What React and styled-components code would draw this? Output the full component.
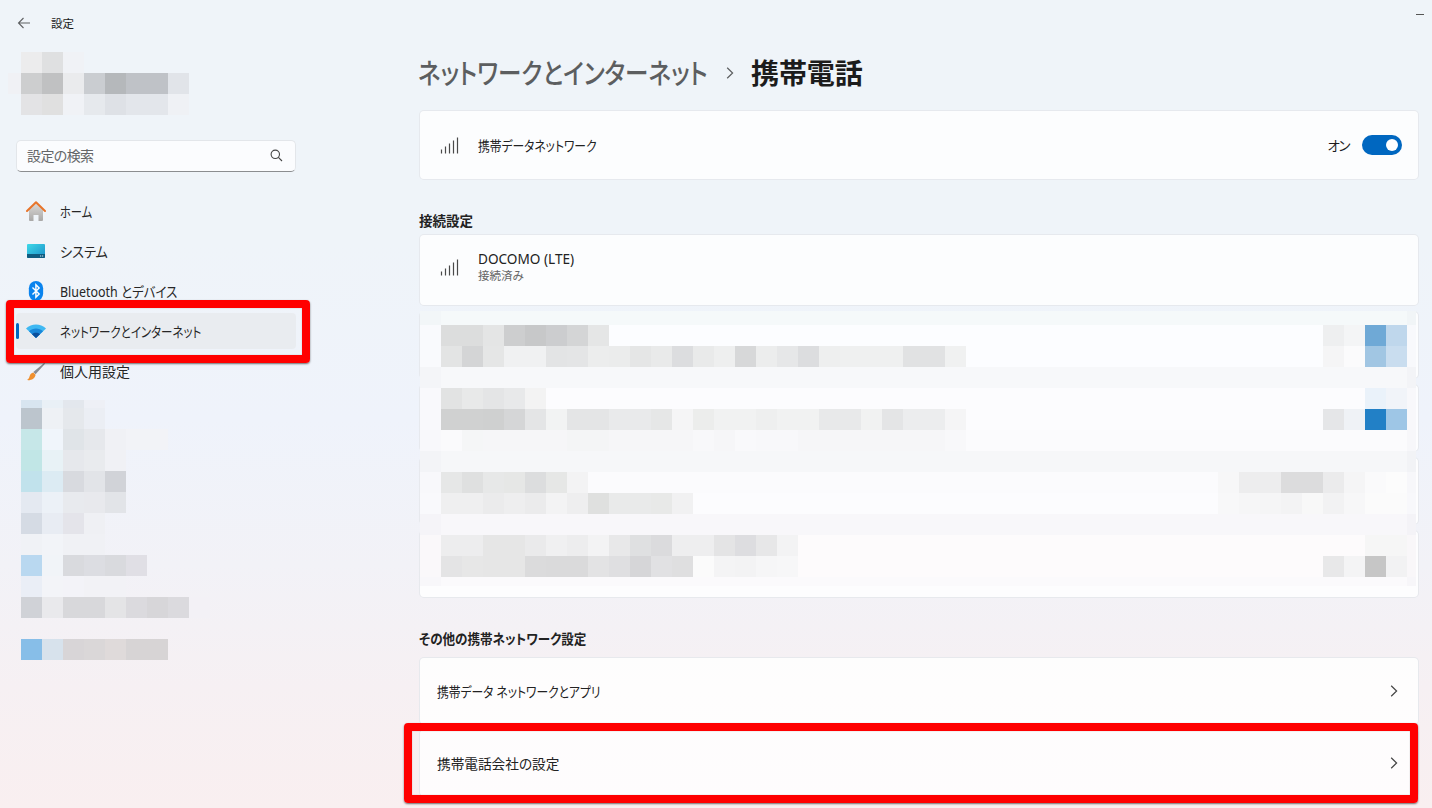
import React from "react";
import styled, { createGlobalStyle } from "styled-components";

const Global = createGlobalStyle`
  html, body { margin: 0; padding: 0; height: 100%; }
  body { font-family: "Noto Sans", "Noto Sans CJK JP", sans-serif; font-feature-settings: "palt"; color: #1b1b1b; }
`;

const Page = styled.div`
  width: 1432px;
  height: 808px;
  overflow: hidden;
  display: flex;
  flex-direction: column;
  background: linear-gradient(180deg, #eff4f9 0%, #eff4f9 30%, #eff3fb 52%, #f2f2f7 70%, #f6f0f3 85%, #f9eff0 100%);
`;
const TitleBar = styled.header`
  height: 46px;
  flex: none;
  display: flex;
  align-items: center;
  padding: 0 8px 0 17px;
  color: #1b1b1b;
`;
const AppTitle = styled.span`
  font-size: 11.5px;
  margin-left: 20px;
`;
const Minimize = styled.span`
  margin-left: auto;
  align-self: flex-start;
  margin-top: 14px;
  width: 8px;
  height: 1px;
  background: #555;
`;
const Body = styled.div`
  flex: 1;
  display: flex;
  min-height: 0;
`;
const Sidebar = styled.aside`
  width: 419px;
  flex: none;
  padding-left: 16px;
  box-sizing: border-box;
`;
const Search = styled.div`
  width: 280px;
  height: 32px;
  box-sizing: border-box;
  margin-top: 25px;
  padding: 0 12px 2px 10px;
  display: flex;
  align-items: center;
  justify-content: space-between;
  background: #fbfcfe;
  border: 1px solid #e3e6ea;
  border-bottom: 1px solid #8b8d90;
  border-radius: 5px;
  font-size: 14px;
  letter-spacing: -0.6px;
  color: #646668;
`;
const Nav = styled.nav`
  width: 280px;
  margin-top: 21px;
  display: flex;
  flex-direction: column;
  gap: 4px;
`;
const NavItem = styled.div`
  position: relative;
  height: 36px;
  display: flex;
  align-items: center;
  border-radius: 4px;
  background: ${(p) => (p.$active ? "#e9ecf0" : "transparent")};
  font-size: 14px;
  color: #262626;
`;
const NavIcon = styled.span`
  width: 44px;
  padding-left: 10px;
  box-sizing: border-box;
  flex: none;
  display: flex;
  align-items: center;
`;
const Indicator = styled.span`
  position: absolute;
  left: 0;
  top: 10px;
  width: 3px;
  height: 16px;
  border-radius: 2px;
  background: #0067c0;
`;
const RedFrame = styled.span`
  position: absolute;
  top: ${(p) => p.$t}px;
  left: ${(p) => p.$l}px;
  right: ${(p) => p.$r}px;
  bottom: ${(p) => p.$b}px;
  border: 8px solid #ff0000;
  border-radius: 4px;
  box-shadow: 0 1px 2px rgba(0, 0, 0, 0.55), inset 0 0 1px rgba(0, 0, 0, 0.45);
  z-index: 2;
`;
/* Yu Gothic's narrow kana: condense the Noto glyphs to the measured run width */
const Squeeze = styled.span`
  display: inline-block;
  white-space: nowrap;
  width: ${(p) => p.$w}px;
  transform-origin: 0 50%;
  transform: scaleX(${(p) => p.$s});
`;
const Main = styled.main`
  flex: 1;
  min-width: 0;
  padding-right: 13px;
`;
const Breadcrumb = styled.h1`
  margin: 8px 0 0;
  height: 38px;
  display: flex;
  align-items: center;
  font-size: 28px;
  font-weight: 500;
  line-height: 38px;
`;
const Crumb = styled(Squeeze)`
  color: #5c5e60;
  margin-left: -1px;
`;
const CrumbSep = styled.span`
  display: flex;
  margin: 0 17px 0 18px;
`;
const CrumbNow = styled.span`
  color: #1c1c1c;
  font-weight: 700;
  letter-spacing: -0.1px;
`;
const Card = styled.div`
  height: ${(p) => p.$h || 68}px;
  box-sizing: border-box;
  display: flex;
  align-items: center;
  padding: 0 ${(p) => p.$pr || 16}px ${(p) => p.$pb || 0}px ${(p) => p.$pl || 20}px;
  background: rgba(255, 255, 255, 0.82);
  border: 1px solid rgba(190, 196, 205, 0.35);
  border-radius: 5px;
  position: relative;
  font-size: 14px;
`;
const FirstCard = styled(Card)`
  margin-top: 18px;
`;
const SectionTitle = styled.h2`
  margin: ${(p) => p.$mt}px 0 3px;
  font-size: 13.5px;
  line-height: 20px;
  font-weight: 700;
  color: #222;
`;
const RowIcon = styled.span`
  width: 38px;
  flex: none;
  display: flex;
`;
const RowText = styled.div`
  flex: 1;
  display: flex;
  flex-direction: column;
`;
const RowLabel = styled.span`
  font-size: 14px;
  line-height: 19px;
  color: #222;
`;
const LatinLabel = styled(RowLabel)`
  font-size: 13.6px;
  margin-top: -1px;
`;
const RowSub = styled.span`
  font-size: 11.5px;
  line-height: 16px;
  color: #666;
`;
const ToggleLabel = styled.span`
  font-size: 13.5px;
  letter-spacing: -1.5px;
  margin-right: 13px;
`;
const Toggle = styled.span`
  width: 40px;
  height: 20px;
  border-radius: 10px;
  background: #0067c0;
  display: flex;
  align-items: center;
  justify-content: flex-end;
  padding-right: 4px;
  box-sizing: border-box;
`;
const Knob = styled.span`
  width: 12px;
  height: 12px;
  border-radius: 50%;
  background: #fff;
`;
const Stack = styled.div`
  position: relative;
  margin-top: ${(p) => p.$mt}px;
  display: flex;
  flex-direction: column;
  gap: ${(p) => p.$gap}px;
`;
const MosaicOverlay = styled.div`
  position: absolute;
  left: 1px;
  top: 0;
  width: 996px;
  display: flex;
  flex-direction: column;
`;
const MosaicRow = styled.div.attrs((p) => ({ style: { background: p.$bg } }))`
  height: ${(p) => p.$h || 21}px;
  box-sizing: border-box;
  display: flex;
  justify-content: space-between;
  padding: 0 9px 0 21px;
  box-shadow: inset 21px 0 rgba(90, 100, 140, 0.018), inset -9px 0 rgba(90, 100, 140, 0.025);
`;
const CellRun = styled.div`
  display: flex;
`;
const Cell = styled.span.attrs((p) => ({ style: { background: p.$c } }))`
  width: 21px;
  height: 100%;
  flex: none;
`;
const BlockMosaic = styled.div`
  display: flex;
  flex-direction: column;
  margin-top: ${(p) => p.$mt || 0}px;
  margin-left: ${(p) => p.$ml || 0}px;
`;
const BlockRow = styled.div`
  display: flex;
  height: ${(p) => p.$h}px;
`;
const TitleGap = styled.div`
  display: flex;
  height: 21px;
  margin-left: -13px;
`;
const PartialCell = styled.span`
  width: 13px;
  background: #f0f1f5;
`;

const cells = (s) => (s ? s.split(" ").map((c) => "#" + c) : []);
const Run = ({ data }) => (
  <CellRun>
    {cells(data).map((c, i) => (
      <Cell key={i} $c={c} />
    ))}
  </CellRun>
);

const mainRows = [
  { h: 14, bg: "#f5f9fa" },
  { bg: "#fcfdff", l: "dcdddd dcdddd e4e5e5 cdcecf c7c8c9 cccdcf d4d5d6 e5e6e6", r: "eeeff0 f4f5f6 6fa9d6 bfd7ec" },
  { bg: "#fcfdff", l: "e3e4e4 d4d5d6 e5e6e6 f0f1f2 f0f1f2 e3e4e5 e4e5e6 eceded ebecec e5e6e6 e9eaea dcdddf e9eaea eeefef d7d8d9 eceded e6e7e8 dcdddf eeefef eff0f0 eff0f0 eff0f0 e1e2e3 e1e2e3 f0f1f1", r: "f5f5f6 fbfbfc a1c6e3 c9ddef" },
  { bg: "#f7f8fa" },
  { bg: "#fcfcfe", l: "e2e3e3 e8e9e9 e4e5e6 e8e9ea f3f3f3", r: "eaf2fa f1f4f9" },
  { bg: "#fcfcfe", l: "d0d1d1 d0d1d1 cfd0d0 d5d6d7 e4e5e6 f2f3f3 e4e5e6 e4e5e6 e9eaeb e9eaeb e6e7e7 f5f5f6 ecedec f1f2f2 f1f2f2 eeefef f1f2f2 f1f2f2 e8e9ea e8e9ea f1f2f2 e4e5e6 ecedee ecedee f5f5f6", r: "e5e6e8 eff2f6 2280c6 9ec6e6" },
  { bg: "#fbfbfd", l: "fafafc f5f6f7 f6f6f8 f6f6f8 f6f6f8 f6f6f8 f4f5f6 f4f5f6 f6f6f8 f6f6f8 f6f6f8 f6f6f8 f8f8fa f6f6f8 f9f9fb f8f8fa f8f8fa f6f6f8 f6f6f8 f6f6f8 f6f6f8 f6f6f8 f6f6f8 f6f6f8 f8f8fa" },
  { bg: "#f6f7f9" },
  { bg: "#fbfbfd", l: "e6e7e7 dfe0e0 e7e8e8 e6e7e6 dcddde e6e7e6 f3f3f4", r: "f7f7f8 ededee ededee dcdcdd dcdcdd ebebec f5f5f6 fafafb fcfcfc" },
  { bg: "#fcfcfe", l: "efeff0 efeff0 ebebec eeeeef ebebec f3f3f4 eeeeef dfe0df e9eaea e9eaea e8e9e8 f1f1f2", r: "f8f8f9 f6f6f7 f5f5f6 f3f3f4 f8f8f8 f2f2f3 f7f7f8 fbfbfb fbfbfb" },
  { bg: "#f8f7fa" },
  { bg: "#fdfbfc", l: "ededee ededee e6e6e6 e6e6e6 eaeaeb f0f0f1 ededee f3f3f4 e8e8e9 dfe0e1 dbdbdd eeeeef eeeeef e4e4e5 dddde0 e7e7e8 f3f3f4", r: "f6f6f6 f6f6f6" },
  { bg: "#fdfbfc", l: "e4e4e5 e7e7e7 e6e6e6 e6e6e6 dbdbdc dadadb dadadb e3e3e4 dfdfe1 d6d6d8 e1e1e3 dfdfe0 fbfbfb f4f4f5 f3f3f4 f6f6f7 f7f7f8", r: "e8e8e9 f4f4f5 c6c6c6 f2f2f3" },
  { h: 9, bg: "#fbfafc" },
];

const sideRows = [
  { h: 8, c: "d8e5f0 e9f0f6 e3e7ed eef0f6" },
  { h: 21, c: "bcc5cd eef1f5 e5e8ec ebeef4" },
  { h: 21, c: "c6e7e8 f0f5fb e0e4e8 e6e8ec f0f1f5 f2f3f7 f2f3f7" },
  { h: 21, c: "c1e6e6 e8f2f6 e6e8ec e9ebee f0f1f5" },
  { h: 21, c: "c1e2ec dcebf3 d8dadf e2e4e8 d1d3d8" },
  { h: 21, c: "e4e9f1 ecf1f7 e8eaee e8e9ed e2e4e8" },
  { h: 21, c: "d5dbe4 e8ecf3 e4e4ea eff0f4" },
  { h: 21, c: "f0f2f6 f2f4f8 f0f1f5 f0f1f5" },
  { h: 21, c: "b9d8f0 f1f4f8 d9dade dcdde2 d9dade e0dfe5" },
  { h: 21, c: "eaeef6 f3f4f8 f3f3f8 f2f2f6 f2f2f6" },
  { h: 21, c: "d0d2d7 e9e9ec d8d8db d8d8db e4e4e6 dbdade d7d6d9 dbdade f3f1f6" },
  { h: 21, c: "" },
  { h: 21, c: "87bee8 d7e2ec d8d5d7 dad7d8 dfdada d7d4d5 d7d4d5" },
];

const BackIcon = () => (
  <svg width="14" height="12" viewBox="0 0 14 12" fill="none" stroke="#5f6163" strokeWidth="1.1">
    <path d="M13 6H1.500M6.500 1 1.500 6l5 5" />
  </svg>
);
const SearchIcon = () => (
  <svg width="13" height="13" viewBox="0 0 13 13" fill="none" stroke="#444" strokeWidth="1.1">
    <circle cx="5.300" cy="5.300" r="4.200" />
    <path d="m8.400 8.400 3.600 3.600" />
  </svg>
);
const Chevron = ({ w = 8, h = 12, color = "#444" }) => (
  <svg width={w} height={h} viewBox="0 0 8 12" fill="none" stroke={color} strokeWidth="1.2">
    <path d="M1.200 .8 6.600 6l-5.400 5.200" />
  </svg>
);
const Signal = () => (
  <svg width="19" height="17" viewBox="0 0 19 17" stroke="#4a4a4a" strokeWidth="1.2">
    <path d="M1.500 16.500v-4M5.500 16.500v-7M9.500 16.500v-10M13.500 16.500v-13M17.500 16.500V.5" />
  </svg>
);
const HomeIcon = () => (
  <svg width="20" height="20" viewBox="0 0 20 20">
    <defs>
      <linearGradient id="hb" x1="0" y1="0" x2="0" y2="1">
        <stop offset="0" stopColor="#dcdad8" />
        <stop offset="1" stopColor="#a9a8a7" />
      </linearGradient>
    </defs>
    <path d="M3 8 10 2 17 8v11a1 1 0 0 1-1 1H12.500v-6h-5v6H4a1 1 0 0 1-1-1Z" fill="url(#hb)" />
    <path d="M1 10 10 1.300 19 10" fill="none" stroke="#e8742a" strokeWidth="2" strokeLinecap="round" strokeLinejoin="round" />
  </svg>
);
const SystemIcon = () => (
  <svg width="18" height="14" viewBox="0 0 18 14" style={{ marginLeft: 1 }}>
    <defs>
      <linearGradient id="sb" x1="0" y1="0" x2="1" y2="1">
        <stop offset="0" stopColor="#3fd9e8" />
        <stop offset="1" stopColor="#1a8fc9" />
      </linearGradient>
    </defs>
    <rect width="18" height="14" rx="1" fill="url(#sb)" />
    <path d="M0 10h18v3a1 1 0 0 1-1 1H1a1 1 0 0 1-1-1Z" fill="#0f5c80" />
    <path d="M13 12h1.200M15 12h1.200" stroke="#cfe6f2" strokeWidth="1" />
  </svg>
);
const BluetoothIcon = () => (
  <svg width="16" height="20" viewBox="0 0 16 21" style={{ marginLeft: 2 }}>
    <rect x="0.500" y="0" width="15" height="21" rx="7.500" fill="#0b84ee" />
    <path d="m4.300 6.800 7 6.800-3.400 3.400V4l3.400 3.400-7 6.800" fill="none" stroke="#fff" strokeWidth="1.500" />
  </svg>
);
const WifiIcon = () => (
  <svg width="20" height="14" viewBox="0 0 20 14">
    <path d="M0 4.500C5.500 -.8 14.500 -.8 20 4.500L10 14Z" fill="#3fb8f2" />
    <path d="M3 7.300C7 3.700 13 3.700 17 7.300L10 14Z" fill="#1a87d9" />
    <path d="M6 10.200C8.300 8.400 11.700 8.400 14 10.200L10 14Z" fill="#0b4f9c" />
  </svg>
);
const BrushIcon = () => (
  <svg width="20" height="19" viewBox="0 0 22 21">
    <path d="M20 1 21 2 10.500 13.500 8 11Z" fill="#8a8d92" />
    <path d="M8 11.500 10.500 14C10 18 6 20.500 1 20c2-1 2.500-2.500 3-4.500.5-2 2-3.700 4-4Z" fill="#f0902e" />
  </svg>
);
const nav = [
  { label: "ホーム", icon: <HomeIcon />, w: 40, s: 0.8 },
  { label: "システム", icon: <SystemIcon />, w: 46, s: 0.94 },
  { label: "Bluetooth とデバイス", icon: <BluetoothIcon />, w: 132, s: 0.89 },
  { label: "ネットワークとインターネット", icon: <WifiIcon />, w: 172, s: 0.82, active: true },
  { label: "個人用設定", icon: <BrushIcon />, w: 70, s: 1 },
];

export default function App() {
  return (
    <Page>
      <Global />
      <TitleBar>
        <BackIcon />
        <AppTitle>設定</AppTitle>
        <Minimize />
      </TitleBar>
      <Body>
        <Sidebar>
          <BlockMosaic $mt={6} $ml={5}>
            <BlockRow $h={21}><Run data="ececed dfe0e1 f0f2f6" /></BlockRow>
            <TitleGap>
              <PartialCell />
              <Run data="cdcecf c0c1c2 eaebed cacdd1 b5b8bb bfc2c7 bfc2c7 e1e4e9" />
            </TitleGap>
            <BlockRow $h={21}><Run data="e3e3e5 e0e0e0 f0f2f6 e6e9ed dee1e6 e3e6eb e3e6eb eff1f5" /></BlockRow>
          </BlockMosaic>
          <Search>
            <span>設定の検索</span>
            <SearchIcon />
          </Search>
          <Nav>
            {nav.map(({ label, icon, active, w, s }) => (
              <NavItem key={label} $active={active}>
                {active && <Indicator />}
                <NavIcon>{icon}</NavIcon>
                <Squeeze $w={w} $s={s}>{label}</Squeeze>
                {active && <RedFrame $t={-13} $l={-10} $r={-14} $b={-14} />}
              </NavItem>
            ))}
          </Nav>
          <BlockMosaic $mt={11} $ml={5}>
            {sideRows.map((r, i) => (
              <BlockRow key={i} $h={r.h}><Run data={r.c} /></BlockRow>
            ))}
          </BlockMosaic>
        </Sidebar>
        <Main>
          <Breadcrumb>
            <Crumb $w={290} $s={0.84}>ネットワークとインターネット</Crumb>
            <CrumbSep><Chevron color="#5c5e60" /></CrumbSep>
            <CrumbNow>携帯電話</CrumbNow>
          </Breadcrumb>
          <FirstCard $h={70}>
            <RowIcon><Signal /></RowIcon>
            <RowText><RowLabel><Squeeze $w={142} $s={0.84}>携帯データネットワーク</Squeeze></RowLabel></RowText>
            <ToggleLabel>オン</ToggleLabel>
            <Toggle><Knob /></Toggle>
          </FirstCard>
          <SectionTitle $mt={31}>接続設定</SectionTitle>
          <Card $h={72} $pb={6}>
            <RowIcon><Signal /></RowIcon>
            <RowText>
              <LatinLabel>DOCOMO (LTE)</LatinLabel>
              <RowSub>接続済み</RowSub>
            </RowText>
          </Card>
          <Stack $gap={5} $mt={5}>
            <Card /><Card /><Card /><Card />
            <MosaicOverlay>
              {mainRows.map((r, i) => (
                <MosaicRow key={i} $h={r.h} $bg={r.bg}>
                  <Run data={r.l} />
                  <Run data={r.r} />
                </MosaicRow>
              ))}
            </MosaicOverlay>
          </Stack>
          <SectionTitle $mt={31}><Squeeze $w={180} $s={0.93}>その他の携帯ネットワーク設定</Squeeze></SectionTitle>
          <Stack $gap={4} $mt={8}>
            <Card $pl={17} $pr={20}>
              <RowText><RowLabel><Squeeze $w={195} $s={0.84}>携帯データ ネットワークとアプリ</Squeeze></RowLabel></RowText>
              <Chevron />
            </Card>
            <Card $pl={17} $pr={20}>
              <RowText><RowLabel><Squeeze $w={125} $s={0.975}>携帯電話会社の設定</Squeeze></RowLabel></RowText>
              <Chevron />
              <RedFrame $t={-7} $l={-16} $r={0} $b={-7} />
            </Card>
          </Stack>
        </Main>
      </Body>
    </Page>
  );
}
